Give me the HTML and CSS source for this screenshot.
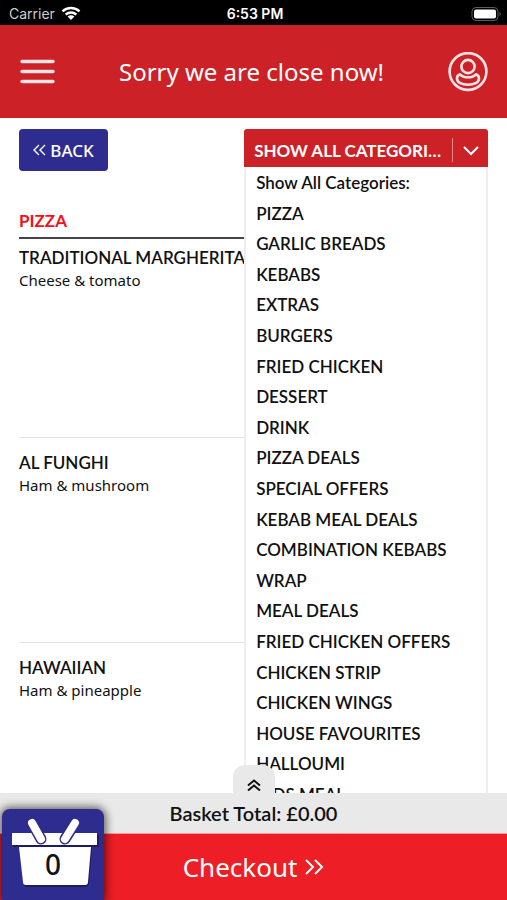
FILE: index.html
```html
<!DOCTYPE html>
<html lang="en">
<head>
    <meta charset="UTF-8">
    <meta name="viewport" content="width=device-width, initial-scale=1.0">
    <title>Menu</title>
    <link rel="stylesheet" href="styles.css">
</head>
<body>
    <div class="status-bar">
        <div class="carrier">
            <span>Carrier</span>
            <svg class="wifi" viewBox="0 0 20 15" width="20" height="15">
                <path d="M1.5 5.4a12.4 12.4 0 0 1 17 0M4.7 8.6a7.7 7.7 0 0 1 10.6 0" fill="none" stroke="#fff" stroke-width="2.5"/>
                <path d="M10 14l-3.4-3.4a4.9 4.9 0 0 1 6.8 0z" fill="#fff"/>
            </svg>
        </div>
        <div class="time">6:53 PM</div>
        <svg class="battery" viewBox="0 0 30 14" width="30" height="14">
            <rect x="1" y="0.5" width="26" height="13" rx="4" fill="none" stroke="#5c5c5c"/>
            <rect x="3" y="2.5" width="22" height="9" rx="2" fill="#fff"/>
            <path d="M28.5 5v4a2.2 2.2 0 0 0 0-4z" fill="#5c5c5c"/>
        </svg>
    </div>

    <header class="header">
        <button class="icon-btn" aria-label="Menu">
            <svg viewBox="0 0 36 26" width="36" height="26">
                <path d="M3 2.5h31M3 12.5h31M3 22.5h31" stroke="#fde4e4" stroke-width="3.4" stroke-linecap="round"/>
            </svg>
        </button>
        <h1 class="title">Sorry we are close now!</h1>
        <button class="icon-btn" aria-label="Account">
            <svg viewBox="0 0 40 40" width="40" height="40" fill="none" stroke="#fde4e4" stroke-width="2.6" stroke-linejoin="round">
                <circle cx="20" cy="19.5" r="18.4"/>
                <circle cx="20" cy="14.5" r="6.6"/>
                <path d="M12 22.3c-2 .8-3 2.5-3 4.2 0 4 5 6.3 11 6.300s11-2.300 11-6.300c0-1.700-1-3.400-3-4.200-1.800 2-4.700 3-8 3s-6.200-1-8-3z"/>
            </svg>
        </button>
    </header>

    <main class="content">
        <div class="toolbar">
            <button class="back">
                <svg viewBox="0 0 13 12" width="13" height="12">
                    <path d="M6 1L1 6l5 5M12 1L7 6l5 5" fill="none" stroke="#fff" stroke-width="1.4"/>
                </svg>
                BACK
            </button>
            <div class="dropdown">
                <select class="category" aria-label="Category">
                    <option>SHOW ALL CATEGORIES:</option>
                </select>
                <svg class="arrow" viewBox="0 0 27 24" width="27" height="24">
                    <path d="M.5 0v24" stroke="#e98a8d"/>
                    <path d="M12 9l7 7 7-7" fill="none" stroke="#fff" stroke-width="2"/>
                </svg>
                <ul class="options">
                    <li>Show All Categories:</li>
                    <li>PIZZA</li>
                    <li>GARLIC BREADS</li>
                    <li>KEBABS</li>
                    <li>EXTRAS</li>
                    <li>BURGERS</li>
                    <li>FRIED CHICKEN</li>
                    <li>DESSERT</li>
                    <li>DRINK</li>
                    <li>PIZZA DEALS</li>
                    <li>SPECIAL OFFERS</li>
                    <li>KEBAB MEAL DEALS</li>
                    <li>COMBINATION KEBABS</li>
                    <li>WRAP</li>
                    <li>MEAL DEALS</li>
                    <li>FRIED CHICKEN OFFERS</li>
                    <li>CHICKEN STRIP</li>
                    <li>CHICKEN WINGS</li>
                    <li>HOUSE FAVOURITES</li>
                    <li>HALLOUMI</li>
                    <li>KIDS MEAL</li>
                </ul>
            </div>
        </div>

        <h2 class="section">PIZZA</h2>
        <div class="item">
            <h3>TRADITIONAL MARGHERITA</h3>
            <p>Cheese &amp; tomato</p>
        </div>
        <div class="item">
            <h3>AL FUNGHI</h3>
            <p>Ham &amp; mushroom</p>
        </div>
        <div class="item">
            <h3>HAWAIIAN</h3>
            <p>Ham &amp; pineapple</p>
        </div>
    </main>

    <footer class="footer">
        <button class="expand" aria-label="Show basket">
            <svg viewBox="0 0 14 12" width="14" height="12">
                <path d="M1 6.5l6-5 6 5M1 11.5l6-5 6 5" fill="none" stroke="#111" stroke-width="2"/>
            </svg>
        </button>
        <div class="total">Basket Total: £0.00</div>
        <button class="checkout">
            Checkout
            <svg viewBox="0 0 20 16" width="20" height="16">
                <path d="M2 1l7 7-7 7M11 1l7 7-7 7" fill="none" stroke="#fff" stroke-width="2"/>
            </svg>
        </button>
        <button class="basket" aria-label="Basket">
            <svg viewBox="0 0 102 91" width="102" height="91">
                <path d="M19 39h71l-3 35q0 4-4 4H25q-3 0-3-3z" fill="#1c1b66"/>
                <path d="M11 26h86v12H11z" fill="#1c1b66"/>
                <path d="M17 38h72l-3 35q0 3-3 3H24q-3 0-3-3z" fill="#fff"/>
                <path d="M10 24h85v12H10z" fill="#fff"/>
                <path d="M30 14l9 16M73 14L63 30" stroke="#2e2c8f" stroke-width="11" stroke-linecap="round"/>
                <path d="M30 14l9 16M73 14L63 30" stroke="#fff" stroke-width="8" stroke-linecap="round"/>
            </svg>
            <span class="count">0</span>
        </button>
    </footer>
</body>
</html>
```

FILE: styles.css
```css
* {
    box-sizing: border-box;
}
body {
    margin: 0;
    height: 100vh;
    display: flex;
    flex-direction: column;
    overflow: hidden;
    background: #fff;
    color: #111;
    font-family: Lato, sans-serif;
    font-size: 17px;
}
button {
    border: 0;
    padding: 0;
    background: none;
    color: #fff;
    font-family: "Noto Sans", sans-serif;
    cursor: pointer;
}
svg {
    display: block;
}
.status-bar {
    display: grid;
    grid-template-columns: 1fr auto 1fr;
    align-items: center;
    height: 25px;
    padding: 2px 6px 0 9px;
    background: #000;
    color: #fff;
    font-family: Inter, sans-serif;
    font-size: 14px;
}
.carrier {
    display: flex;
    align-items: center;
    gap: 6px;
    color: #ccc;
}
.time {
    font-weight: 600;
}
.battery {
    justify-self: end;
}
.header {
    display: flex;
    align-items: center;
    justify-content: space-between;
    height: 93px;
    padding: 0 19px;
    background: #cc2127;
}
.title {
    margin: 0;
    color: #fff;
    font-family: "Noto Sans", sans-serif;
    font-size: 24px;
    font-weight: 400;
}
.content {
    flex: 1;
    min-height: 0;
    overflow: hidden;
    padding: 11px 19px 0;
}
.toolbar {
    display: flex;
    justify-content: space-between;
    align-items: flex-start;
}
.back {
    display: flex;
    align-items: center;
    justify-content: center;
    gap: 4px;
    width: 89px;
    height: 42px;
    border-radius: 4px;
    background: #2e2c8f;
    font-size: 17px;
    font-weight: 500;
}
.dropdown {
    position: relative;
    width: 52%;
}
.category {
    display: block;
    appearance: none;
    width: 100%;
    height: 38px;
    padding: 5px 44px 0 10px;
    border: 0;
    border-radius: 3px 3px 0 0;
    background: #cc2127;
    color: #fff;
    font-family: Lato, sans-serif;
    font-size: 17px;
    font-weight: 700;
    text-overflow: ellipsis;
    overflow: hidden;
    white-space: nowrap;
}
.arrow {
    position: absolute;
    top: 9px;
    right: 9px;
    pointer-events: none;
}
.options {
    position: absolute;
    top: 100%;
    left: 0;
    right: 0;
    margin: 0;
    padding: 1px 10px;
    border: 2px solid #eee;
    border-top: 0;
    background: #fff;
    list-style: none;
    line-height: 1.8;
    font-weight: 600;
}
.section {
    margin: 38px 0 0;
    padding-bottom: 4px;
    border-bottom: 2px solid #444;
    color: #f5101a;
    font-size: 17px;
    font-weight: 700;
    line-height: 24px;
}
.item {
    height: 205px;
    padding-top: 13px;
    border-bottom: 1px solid #e4e4e4;
}
.section + .item {
    height: 199px;
    padding-top: 7px;
}
.item h3 {
    margin: 0;
    font-size: 17px;
    font-weight: 600;
    line-height: 24px;
}
.item p {
    margin: 0;
    font-family: "Noto Sans", sans-serif;
    font-size: 15px;
    line-height: 20px;
}
.footer {
    position: relative;
}
.expand {
    position: absolute;
    left: 46%;
    bottom: 100%;
    display: flex;
    align-items: center;
    justify-content: center;
    width: 42px;
    height: 28px;
    padding-top: 12px;
    border-radius: 12px 12px 0 0;
    background: #e9e9e9;
}
.total {
    background: #e9e9e9;
    font-size: 20px;
    font-weight: 600;
    line-height: 40px;
    text-align: center;
}
.checkout {
    display: flex;
    align-items: center;
    justify-content: center;
    gap: 7px;
    width: 100%;
    height: 67px;
    border-top: 1px solid #f59a9d;
    background: #ee1e26;
    font-size: 26px;
}
.basket {
    position: absolute;
    left: 2px;
    bottom: 0;
    width: 102px;
    border-radius: 8px 8px 0 0;
    background: #2e2c8f;
    box-shadow: 0 0 8px 2px rgba(0, 0, 0, 0.6);
}
.count {
    position: absolute;
    top: 36px;
    left: 0;
    right: 0;
    color: #111;
    font-size: 28px;
    font-weight: 500;
}
```
